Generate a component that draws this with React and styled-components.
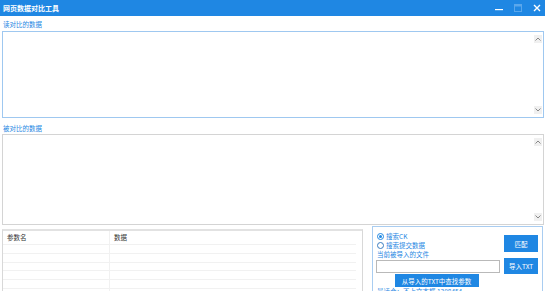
import styled, { createGlobalStyle } from "styled-components";

const Global = createGlobalStyle`
  html, body { margin: 0; padding: 0; background: #fff; }
  body {
    width: 545px;
    height: 291px;
    overflow: hidden;
    font-family: "Noto Sans CJK SC", "Liberation Sans", sans-serif;
  }
`;

const BLUE = "#1f87e3";

const Window = styled.div`
  display: flex;
  flex-direction: column;
  width: 545px;
  height: 291px;
  overflow: hidden;
`;

const TitleBar = styled.div`
  display: flex;
  align-items: center;
  height: 16px;
  flex: none;
  background: ${BLUE};
  padding: 0 3px 0 3px;
`;

const Title = styled.div`
  flex: 1;
  color: #fff;
  font-size: 7px;
  font-weight: bold;
`;

const Controls = styled.div`
  display: flex;
  align-items: center;
  gap: 9px;
`;

const Ctrl = styled.div`
  width: 10px;
  display: flex;
  justify-content: center;
`;

const Body = styled.div`
  display: flex;
  flex-direction: column;
  padding: 0 1px 0 2px;
`;

const Label = styled.div`
  color: ${BLUE};
  font-size: 6.5px;
  line-height: 10px;
  height: 10px;
  padding: ${(p) => p.$top}px 0 ${(p) => p.$bottom}px 1px;
`;

const Area = styled.div`
  display: flex;
  height: ${(p) => p.$h}px;
  border: 1px solid ${(p) => (p.$active ? "#9fc8f0" : "#d4d4d4")};
  box-sizing: border-box;
  background: #fff;
`;

const AreaText = styled.div`
  flex: 1;
`;

const ScrollCol = styled.div`
  width: 9px;
  display: flex;
  flex-direction: column;
  justify-content: space-between;
  align-items: center;
  padding: 3px 1px 3px 0;
`;

const Arrow = styled.div`
  width: 8px;
  height: 8px;
  background: #f0f0f0;
  display: flex;
  align-items: center;
  justify-content: center;
`;

const Bottom = styled.div`
  display: flex;
  gap: 9px;
  margin-top: 1px;
`;

const Table = styled.div`
  width: 361px;
  height: 70px;
  margin-top: 3px;
  border: 1px solid #d8d8d8;
  border-top: 2px solid #e2e2e2;
  box-sizing: border-box;
  display: flex;
  flex-direction: column;
`;

const Row = styled.div`
  display: grid;
  grid-template-columns: 107px 1fr;
  height: ${(p) => (p.$head ? 13 : 8)}px;
  border-bottom: 1px solid #f1f1f1;
  font-size: 6.5px;
  line-height: 13px;
  color: #333;
  margin-right: 6px;
`;

const Cell = styled.div`
  padding-left: 4px;
  border-right: ${(p) => (p.$first ? "1px solid #f1f1f1" : "none")};
`;

const Panel = styled.div`
  flex: 1;
  margin-right: 1px;
  border: 1px solid #a9cdf1;
  border-bottom: none;
  box-sizing: border-box;
  display: flex;
  flex-direction: column;
  padding: 5px 3px 0 3px;
  height: 70px;
`;

const PanelTop = styled.div`
  display: flex;
  gap: 4px;
`;

const Options = styled.div`
  flex: 1;
  display: flex;
  flex-direction: column;
`;

const Radio = styled.div`
  display: flex;
  align-items: center;
  gap: 2px;
  font-size: 6.5px;
  height: 9px;
  line-height: 9px;
  color: ${BLUE};
  padding-left: 1px;
`;

const Dot = styled.span`
  width: 5px;
  height: 5px;
  border-radius: 50%;
  border: 1px solid ${(p) => (p.$on ? BLUE : "#3a7cc0")};
  background: #fff;
  display: flex;
  align-items: center;
  justify-content: center;
  &::after {
    content: "";
    width: 3px;
    height: 3px;
    border-radius: 50%;
    background: ${(p) => (p.$on ? BLUE : "transparent")};
  }
`;

const Note = styled.div`
  font-size: 6.5px;
  line-height: 9px;
  color: ${BLUE};
  padding-left: 1px;
`;

const Input = styled.div`
  height: 13px;
  margin-top: 1px;
  border: 1px solid #b9b9b9;
  box-sizing: border-box;
  background: #fff;
`;

const Buttons = styled.div`
  display: flex;
  flex-direction: column;
  gap: 6px;
  width: 34px;
  padding-top: 3px;
  margin-right: 1px;
`;

const Btn = styled.div`
  background: ${BLUE};
  color: #fff;
  font-size: 6.5px;
  height: ${(p) => p.$h || 17}px;
  display: flex;
  align-items: center;
  justify-content: center;
  white-space: nowrap;
`;

const Center = styled.div`
  display: flex;
  justify-content: center;
  padding-right: 42px;
`;

const Wide = styled(Btn)`
  width: 84px;
  height: 13px;
`;

const Foot = styled.div`
  font-size: 6.5px;
  line-height: 9px;
  color: ${BLUE};
  padding-left: 1px;
  margin-top: 0;
  white-space: nowrap;
`;

const Up = () => (
  <svg width="6" height="4" viewBox="0 0 6 4">
    <path d="M0.5 3.5 L3 1 L5.5 3.5" fill="none" stroke="#888" strokeWidth="1" />
  </svg>
);

const Down = () => (
  <svg width="6" height="4" viewBox="0 0 6 4">
    <path d="M0.5 0.5 L3 3 L5.5 0.5" fill="none" stroke="#888" strokeWidth="1" />
  </svg>
);

const TextBox = ({ h, active }) => (
  <Area $h={h} $active={active}>
    <AreaText />
    <ScrollCol>
      <Arrow>
        <Up />
      </Arrow>
      <Arrow>
        <Down />
      </Arrow>
    </ScrollCol>
  </Area>
);

export default function App() {
  return (
    <Window>
      <Global />
      <TitleBar>
        <Title>网页数据对比工具</Title>
        <Controls>
          <Ctrl>
            <svg width="8" height="8" viewBox="0 0 8 8">
              <rect x="0" y="5" width="8" height="1.2" fill="#fff" />
            </svg>
          </Ctrl>
          <Ctrl>
            <svg width="8" height="8" viewBox="0 0 8 8">
              <rect x="0.5" y="0.5" width="7" height="7" fill="none" stroke="#5aa7ec" />
              <rect x="0.5" y="0.5" width="7" height="2" fill="#5aa7ec" />
            </svg>
          </Ctrl>
          <Ctrl>
            <svg width="8" height="8" viewBox="0 0 8 8">
              <path d="M1 1 L7 7 M7 1 L1 7" stroke="#fff" strokeWidth="1.4" />
            </svg>
          </Ctrl>
        </Controls>
      </TitleBar>
      <Body>
        <Label $top={3} $bottom={2}>读对比的数据</Label>
        <TextBox h={87} active />
        <Label $top={5} $bottom={1}>被对比的数据</Label>
        <TextBox h={91} />
        <Bottom>
          <Table>
            <Row $head>
              <Cell $first>参数名</Cell>
              <Cell>数据</Cell>
            </Row>
            {[0, 1, 2, 3, 4, 5].map((i) => (
              <Row key={i}>
                <Cell $first />
                <Cell />
              </Row>
            ))}
          </Table>
          <Panel>
            <PanelTop>
              <Options>
                <Radio>
                  <Dot $on />
                  搜索CK
                </Radio>
                <Radio>
                  <Dot />
                  搜索提交数据
                </Radio>
                <Note>当前被导入的文件</Note>
                <Input />
              </Options>
              <Buttons>
                <Btn>匹配</Btn>
                <Btn $h={16}>导入TXT</Btn>
              </Buttons>
            </PanelTop>
            <Center>
              <Wide>从导入的TXT中查找参数</Wide>
            </Center>
            <Foot>最适合：不上文本框 1308454</Foot>
          </Panel>
        </Bottom>
      </Body>
    </Window>
  );
}
